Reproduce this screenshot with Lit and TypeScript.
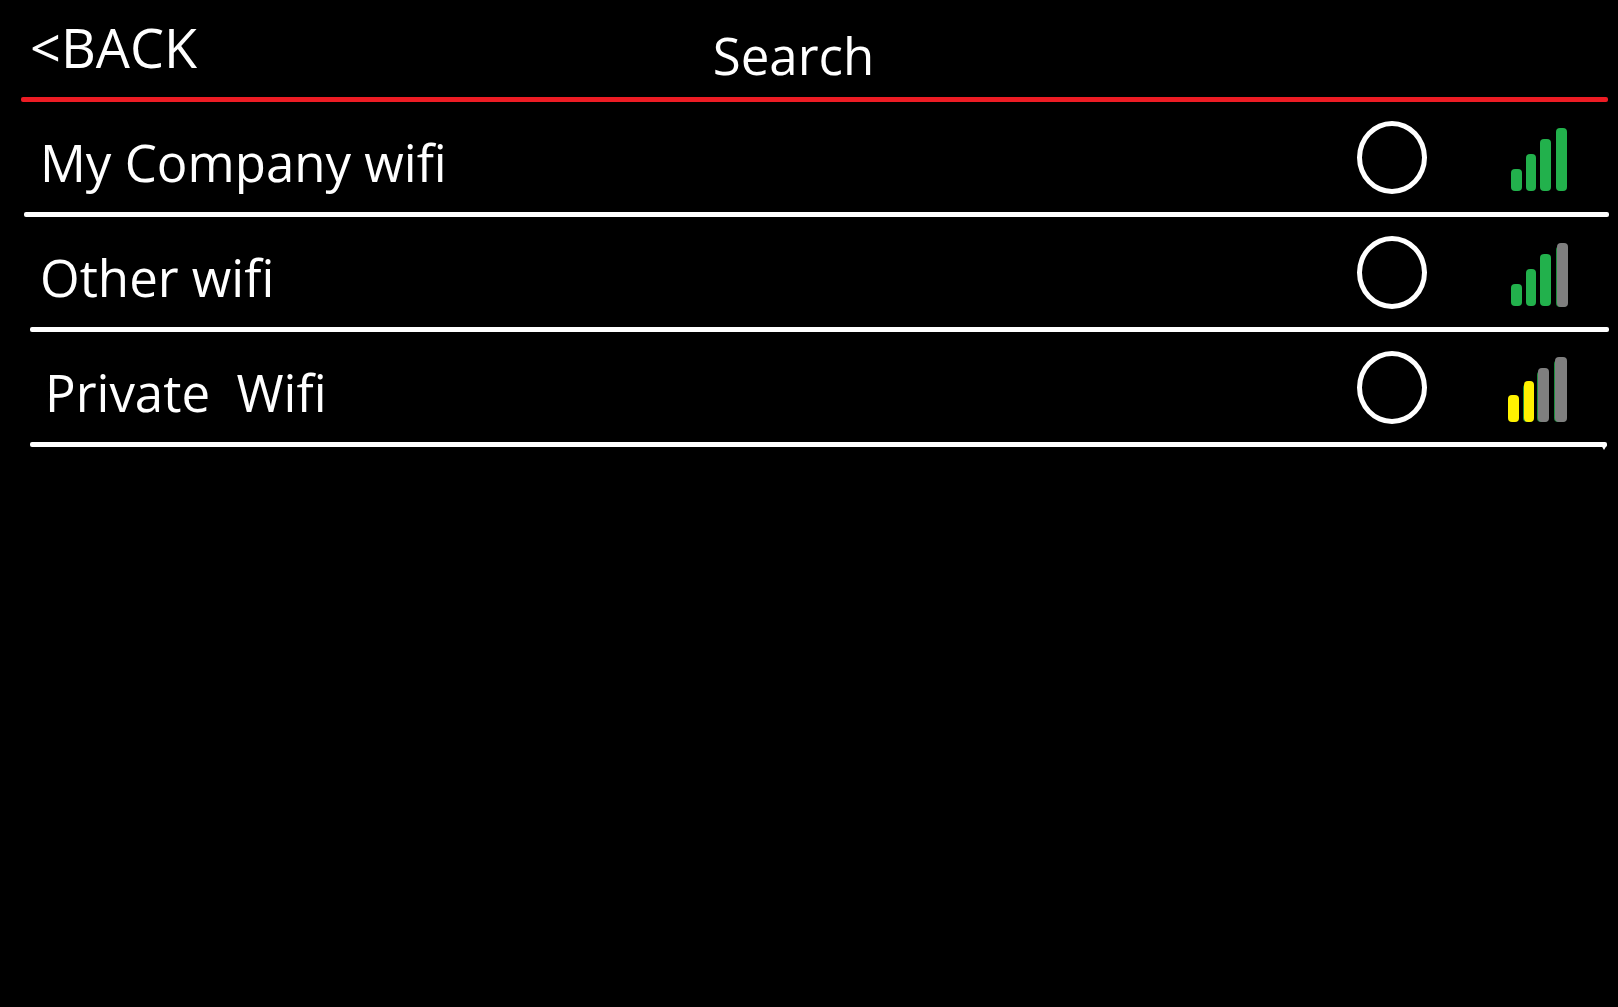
import { LitElement, html, svg, css } from "lit";
import { customElement, property, state } from "lit/decorators.js";
import { classMap } from "lit/directives/class-map.js";

type Tone = "green" | "yellow" | "gray";

interface Bar {
  x: number;
  top: number;
  bottom: number;
  width: number;
  tone: Tone;
  edged?: boolean;
}

interface Network {
  id: string;
  name: string;
  bars: Bar[];
}

const NETWORKS: Network[] = [
  {
    id: "company",
    name: "My Company wifi",
    bars: [
      { x: 3, top: 43, bottom: 65, width: 11, tone: "green" },
      { x: 18, top: 28, bottom: 65, width: 10, tone: "green" },
      { x: 32, top: 13, bottom: 65, width: 11, tone: "green" },
      { x: 48, top: 2, bottom: 65, width: 11, tone: "green" },
    ],
  },
  {
    id: "other",
    name: "Other wifi",
    bars: [
      { x: 3, top: 43, bottom: 65, width: 11, tone: "green" },
      { x: 18, top: 28, bottom: 65, width: 10, tone: "green" },
      { x: 32, top: 13, bottom: 65, width: 11, tone: "green" },
      { x: 49, top: 2, bottom: 66, width: 11, tone: "gray", edged: true },
    ],
  },
  {
    id: "private",
    name: "Private  Wifi",
    bars: [
      { x: 0, top: 39, bottom: 66, width: 11, tone: "yellow" },
      { x: 16, top: 25, bottom: 66, width: 10, tone: "yellow", edged: true },
      { x: 30, top: 12, bottom: 66, width: 11, tone: "gray", edged: true },
      { x: 47, top: 1, bottom: 66, width: 12, tone: "gray", edged: true },
    ],
  },
];

@customElement("signal-bars")
export class SignalBars extends LitElement {
  @property({ attribute: false }) bars: Bar[] = [];

  static styles = css`
    :host {
      display: block;
    }
    .signal {
      display: block;
      width: 60px;
      height: 68px;
    }
    .green,
    .edge {
      fill: #22b14c;
    }
    .edge {
      opacity: 0.8;
    }
    .yellow {
      fill: #fff200;
    }
    .gray {
      fill: #7f7f7f;
    }
  `;

  render() {
    return html`<svg class="signal" viewBox="0 0 60 68" aria-hidden="true">
      ${this.bars.map(
        (b) => svg`
          ${
            b.edged
              ? svg`<rect class="edge" x=${b.x - 1} y=${b.top + 3} width=${b.width}
                  height=${b.bottom - b.top - 3} rx="4"></rect>`
              : null
          }
          <rect class=${b.tone} x=${b.x} y=${b.top} width=${b.width}
            height=${b.bottom - b.top} rx="4"></rect>`
      )}
    </svg>`;
  }
}

@customElement("app-root")
export class AppRoot extends LitElement {
  @state() private selected = "";

  static styles = css`
    :host {
      display: block;
      box-sizing: border-box;
      min-height: 100vh;
      background: #000;
      color: #fff;
      font-family: "Open Sans", "Noto Sans", sans-serif;
      font-size: 51px;
      line-height: 64px;
      font-variant-ligatures: none;
    }
    .header {
      display: grid;
      grid-template-columns: 1fr auto 1fr;
      align-items: start;
      padding: 15px 61px 8px 30px;
    }
    .back {
      justify-self: start;
      margin: 0;
      padding: 0;
      border: 0;
      background: none;
      color: inherit;
      font: inherit;
      font-size: 54px;
      cursor: pointer;
    }
    .title {
      margin: 0;
      padding-top: 8px;
      padding-bottom: 2px;
      font: inherit;
    }
    .rule {
      position: relative;
      height: 5px;
      border-radius: 2px;
      background: #fff;
      margin: 0 9px 0 30px;
    }
    .rule.red {
      background: #ed1c24;
      margin: 0 10px 0 21px;
    }
    .rule.wide {
      margin-left: 24px;
    }
    .rule.tailed {
      margin-right: 11px;
    }
    .rule.tailed::after {
      content: "";
      position: absolute;
      right: 0;
      top: 3px;
      width: 6px;
      height: 5px;
      background: #fff;
      clip-path: polygon(0 0, 100% 0, 50% 100%);
    }
    .list {
      margin: 0;
      padding: 0;
      list-style: none;
    }
    .row {
      display: flex;
      align-items: flex-end;
      padding: 19px 50px 18px 40px;
    }
    .row.indented {
      padding-left: 45px;
    }
    .name {
      flex: 1;
      white-space: pre;
      cursor: pointer;
    }
    .pick {
      appearance: none;
      box-sizing: border-box;
      flex: none;
      width: 70px;
      height: 73px;
      margin: 0 81px 0 0;
      border: 5px solid #fff;
      border-radius: 50%;
      background: transparent;
      cursor: pointer;
    }
    .pick:checked {
      background: radial-gradient(closest-side, #fff 55%, transparent 58%);
    }
  `;

  render() {
    return html`
      <header class="header">
        <button class="back" type="button">&lt;BACK</button>
        <h1 class="title">Search</h1>
      </header>
      <div class="rule red"></div>
      <ul class="list">
        ${NETWORKS.map(
          (n, i) => html`<li>
            <div class=${classMap({ row: true, indented: i === 2 })}>
              <label class="name" for=${n.id}>${n.name}</label>
              <input
                class="pick"
                type="radio"
                name="network"
                id=${n.id}
                .checked=${this.selected === n.id}
                @change=${() => (this.selected = n.id)}
              />
              <signal-bars .bars=${n.bars}></signal-bars>
            </div>
            <div class=${classMap({ rule: true, wide: i === 0, tailed: i === 2 })}></div>
          </li>`
        )}
      </ul>
    `;
  }
}
